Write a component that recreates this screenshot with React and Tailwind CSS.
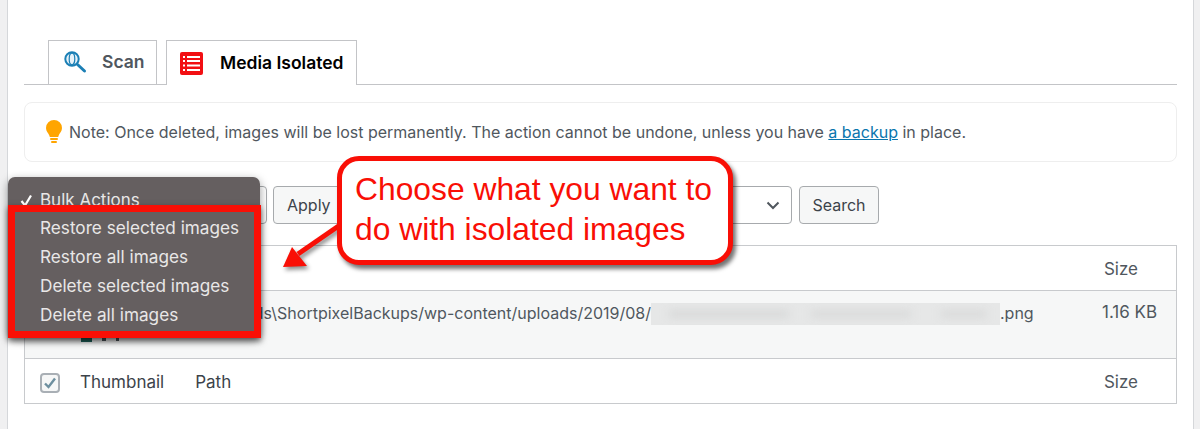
import React from "react";

const sans = { fontFamily: "Inter, 'Liberation Sans', sans-serif" };

function ScanIcon() {
  return (
    <svg width="23" height="23" viewBox="0 0 23 23" fill="none">
      <circle cx="8" cy="8" r="6.700" stroke="#1b7fb5" strokeWidth="2" fill="#e8f3f9" />
      <ellipse cx="8" cy="8" rx="2.800" ry="5.800" stroke="#1b7fb5" strokeWidth="1.200" />
      <path d="M13.500 13.500L20.500 20" stroke="#1b7fb5" strokeWidth="3" strokeLinecap="round" />
    </svg>
  );
}

function ListIcon() {
  return (
    <svg width="23" height="23" viewBox="0 0 23 23">
      <rect width="23" height="23" rx="2" fill="#f20f13" />
      <g fill="#fff">
        <rect x="7" y="4" width="13" height="2" />
        <rect x="7" y="8" width="13" height="2" />
        <rect x="7" y="12.500" width="13" height="2" />
        <rect x="7" y="17" width="13" height="2" />
        <rect x="3" y="4" width="2" height="2" />
        <rect x="3" y="8" width="2" height="2" />
        <rect x="3" y="12.500" width="2" height="2" />
        <rect x="3" y="17" width="2" height="2" />
      </g>
    </svg>
  );
}

function Bulb() {
  return (
    <svg width="16" height="23" viewBox="0 0 16 23">
      <path d="M8 0a8 8 0 0 0-8 8c0 3.200 2.200 5 3.200 7.200.3.700.5 1.300.6 1.800h8.400c.1-.5.3-1.100.6-1.800C13.800 13 16 11.200 16 8a8 8 0 0 0-8-8z" fill="#ffa500" />
      <rect x="4" y="18" width="8" height="2" rx="1" fill="#ffa500" />
      <rect x="5" y="21" width="6" height="2" rx="1" fill="#ffa500" />
    </svg>
  );
}

function Check() {
  return (
    <span className="flex h-[20px] w-[20px] items-center justify-center rounded-[4px] border-2 border-[#a9afb5] bg-[#f6f7f7]">
      <svg width="14" height="14" viewBox="0 0 14 14" fill="none">
        <path d="M2 7.500L5.500 11L12 2.500" stroke="#6d8f9f" strokeWidth="2.400" />
      </svg>
    </span>
  );
}

export default function App() {
  return (
    <div className="relative h-[429px] w-[1200px] overflow-hidden bg-[#f0f0f1]" style={sans}>
      <div className="ml-[7px] mr-[6px] h-full border-x border-[#d5d7da] bg-white px-[16px] pt-[40px] text-[#50575e]">
        {/* Tabs */}
        <div className="flex h-[45px] items-stretch gap-[9px] border-b border-[#c3c4c7] pl-[24px]">
          <div className="flex w-[109px] items-center border border-b-0 border-[#c3c4c7] pl-[15px]">
            <ScanIcon />
            <span className="ml-[15px] text-[17.500px] font-semibold text-[#50575e]">Scan</span>
          </div>
          <div className="relative -mb-px flex w-[191px] items-center border border-b-0 border-[#c3c4c7] bg-white pl-[13px]">
            <ListIcon />
            <span className="ml-[17px] text-[17.500px] font-semibold text-black">Media Isolated</span>
          </div>
        </div>

        {/* Notice */}
        <div className="mt-[17px] flex h-[60px] items-center rounded-[8px] border border-[#eeeeee] pb-[1px] pl-[21px] text-[16px] text-[#50575e]">
          <Bulb />
          <span className="ml-[7px]">
            Note: Once deleted, images will be lost permanently. The action cannot be undone, unless you have{" "}
            <span className="text-[#0a75ad] underline">a backup</span> in place.
          </span>
        </div>

        {/* Toolbar */}
        <div className="mt-[24px] flex h-[38px] items-center text-[#3c434a]">
          <div className="h-[38px] w-[243px] rounded-[4px] border border-[#a7aaad]" />
          <div className="ml-[6px] flex h-[38px] w-[70px] items-center rounded-[4px] border border-[#a7aaad] bg-[#f6f7f7] pl-[13px] text-[16px]">
            Apply
          </div>
          <div className="ml-[6px] flex h-[38px] w-[443px] items-center justify-end rounded-[4px] border border-[#a7aaad] pr-[11px]">
            <svg width="14" height="9" viewBox="0 0 14 9" fill="none">
              <path d="M1.500 1.500L7 7L12.500 1.500" stroke="#50575e" strokeWidth="2" />
            </svg>
          </div>
          <div className="ml-[7px] flex h-[38px] w-[80px] items-center justify-center rounded-[4px] border border-[#a7aaad] bg-[#f6f7f7] text-[16px]">
            Search
          </div>
        </div>

        {/* Table */}
        <div className="mt-[21px] border border-[#c8cacd] text-[17px] text-[#50575e]">
          <div className="flex h-[45px] items-center justify-end border-b border-[#c8cacd] pr-[38px] pt-[3px]">
            <span>Size</span>
          </div>
          <div className="flex h-[68px] border-b border-[#c8cacd] bg-[#f6f7f7] pt-[11px] text-[16px]">
            <div className="flex h-[22px] w-[626px] shrink-0 items-center justify-end whitespace-nowrap">
              <span>ds\ShortpixelBackups/wp-content/uploads/2019/08/</span>
            </div>
            <div className="relative mt-[1px] h-[22px] w-[349px] shrink-0 overflow-hidden">
              <div className="absolute inset-0 bg-[#e6e7e7]" />
              <div className="absolute left-[18px] top-[8px] h-[6px] w-[120px] bg-[#d4d5d5] blur-[4px]" />
              <div className="absolute left-[160px] top-[8px] h-[6px] w-[100px] bg-[#d6d7d7] blur-[4px]" />
              <div className="absolute left-[290px] top-[8px] h-[6px] w-[45px] bg-[#d6d7d7] blur-[4px]" />
            </div>
            <div className="flex h-[22px] w-[102px] shrink-0 items-center">.png</div>
            <div className="flex h-[22px] items-center text-[17px]">1.16 KB</div>
          </div>
          <div className="flex h-[44px] items-center pl-[15px] pr-[38px] pt-[3px] text-[#3c434a]">
            <Check />
            <span className="ml-[20px]">Thumbnail</span>
            <span className="ml-[31px] grow">Path</span>
            <span className="text-[#50575e]">Size</span>
          </div>
        </div>
      </div>

      {/* thumbnail peeking below the menu */}
      <div className="absolute left-[81px] top-[336px] h-[6px] w-[11px] bg-[#20655d]" />
      <div className="absolute left-[102px] top-[338px] h-[3px] w-[4px] bg-[#50575e]" />
      <div className="absolute left-[116px] top-[337px] h-[4px] w-[3px] bg-[#50575e]" />

      {/* Bulk actions menu */}
      <div className="absolute left-[8px] top-[177px] h-[160px] w-[252px] rounded-[7px] bg-[#655f60] text-[17px] text-[#e9e7e7] shadow-[0_3px_10px_rgba(0,0,0,0.4)]">
        <div className="absolute left-[12px] top-[12px] flex items-center">
          <svg width="13" height="13" viewBox="0 0 13 13" fill="none">
            <path d="M1.500 7L5 11.500L11 1.500" stroke="#fff" strokeWidth="2.200" />
          </svg>
          <span className="ml-[7px] leading-[22px]">Bulk Actions</span>
        </div>
      </div>
      <div className="absolute left-[8px] top-[205px] flex h-[133px] w-[253px] flex-col border-[7px] border-[#f90f06] pl-[25px] pt-[1px] text-[17.200px] leading-[29px] text-[#e9e7e7] shadow-[0_3px_6px_rgba(0,0,0,0.55)]">
        <span>Restore selected images</span>
        <span>Restore all images</span>
        <span>Delete selected images</span>
        <span>Delete all images</span>
      </div>

      {/* Arrow */}
      <svg className="absolute left-[278px] top-[220px]" width="70" height="60" viewBox="0 0 70 60" fill="none">
        <g style={{ filter: "drop-shadow(2px 3px 2px rgba(0,0,0,0.45))" }}>
          <path d="M62 5L20 34" stroke="#f90f06" strokeWidth="5" />
          <path d="M5 47L14 27L29 46Z" fill="#f90f06" />
        </g>
      </svg>

      {/* Callout */}
      <div
        className="absolute left-[337px] top-[156px] flex h-[109px] w-[396px] flex-col justify-center rounded-[22px] border-[5px] border-[#f90f06] bg-white pb-[4px] pl-[13px] text-[31.800px] leading-[40px] text-[#f90f06] shadow-[3px_4px_4px_rgba(0,0,0,0.55)]"
        style={{ fontFamily: "'Liberation Sans', Arial, sans-serif" }}
      >
        <span>Choose what you want to</span>
        <span>do with isolated images</span>
      </div>
    </div>
  );
}
